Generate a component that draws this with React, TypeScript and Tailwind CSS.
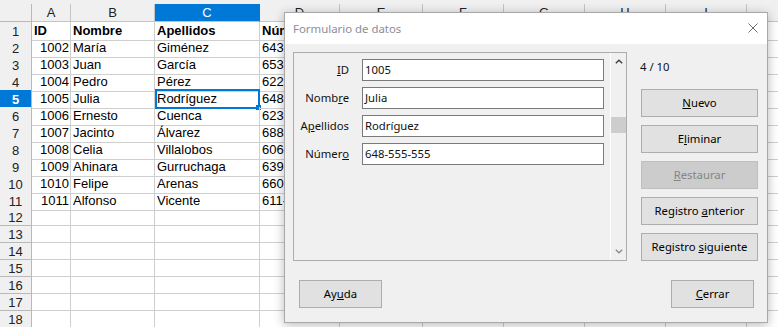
import React from 'react';

const colLetters = ['A', 'B', 'C', 'D', 'E', 'F', 'G', 'H', 'I', 'J'];

const rows: string[][] = [
  ['ID', 'Nombre', 'Apellidos', 'Número'],
  ['1002', 'María', 'Giménez', '643-555-555'],
  ['1003', 'Juan', 'García', '653-555-555'],
  ['1004', 'Pedro', 'Pérez', '622-555-555'],
  ['1005', 'Julia', 'Rodríguez', '648-555-555'],
  ['1006', 'Ernesto', 'Cuenca', '623-555-555'],
  ['1007', 'Jacinto', 'Álvarez', '688-555-555'],
  ['1008', 'Celia', 'Villalobos', '606-555-555'],
  ['1009', 'Ahinara', 'Gurruchaga', '639-555-555'],
  ['1010', 'Felipe', 'Arenas', '660-555-555'],
  ['1011', 'Alfonso', 'Vicente', '611-555-555'],
];

const gridCols =
  'grid grid-cols-[32px_39px_84px_105px_80px_83px_81px_81px_81px_81px_81px]';

// label with one underlined access key
const Key = ({ text, k }: { text: string; k: number }) => (
  <span>
    {text.slice(0, k)}
    <span className="underline underline-offset-[1px]">{text[k]}</span>
    {text.slice(k + 1)}
  </span>
);

const Sheet = () => (
  <div className="w-[778px] h-[327px] overflow-hidden bg-white font-['Liberation_Sans',Arial,sans-serif] text-[13px] text-black">
    <div className="h-[4px] bg-[#f0f0f0]" />
    {/* column header */}
    <div className={`${gridCols} h-[18px] bg-[#f0f0f0] text-[#222]`}>
      <div className="border-r border-b border-[#b9b9b9]" />
      {colLetters.map((c) => (
        <div
          key={c}
          className={`border-r border-b border-[#c4c4c4] flex items-center justify-center leading-none overflow-hidden ${
            c === 'C' ? 'bg-[#0078d7] text-white border-r-[#0078d7]' : ''
          }`}
        >
          {c}
        </div>
      ))}
    </div>
    {Array.from({ length: 18 }).map((_, i) => {
      const r = rows[i] || [];
      const n = i + 1;
      return (
        <div key={n} className={`${gridCols} h-[17px]`}>
          <div
            className={`border-r border-b border-[#b9b9b9] flex items-center justify-center leading-none ${
              n === 5 ? 'bg-[#0078d7] text-white font-bold' : 'bg-[#f0f0f0] text-[#222]'
            }`}
          >
            {n}
          </div>
          {colLetters.map((c, ci) => {
            const v = r[ci] || '';
            const isNum = i > 0 && ci === 0;
            return (
              <div
                key={c}
                className={`relative border-r border-b border-[#cfcfcf] leading-[18px] whitespace-nowrap ${
                  isNum ? 'text-right pr-[1px]' : 'pl-[2px]'
                } ${n === 1 ? 'font-bold' : ''}`}
              >
                <div className="overflow-hidden h-full">{v}</div>
                {n === 5 && c === 'C' && (
                  <div className="absolute left-0 -top-[1px] -right-[1px] -bottom-[1px] border-2 border-[#0078d7]">
                    <div className="absolute -right-[3px] -bottom-[3px] w-[5px] h-[5px] bg-[#0078d7]" />
                  </div>
                )}
              </div>
            );
          })}
        </div>
      );
    })}
  </div>
);

const Btn = ({
  children,
  disabled,
  w = 'w-[117px]',
}: {
  children: React.ReactNode;
  disabled?: boolean;
  w?: string;
}) => (
  <div
    className={`${w} h-[28px] border flex items-center justify-center ${
      disabled
        ? 'bg-[#cccccc] border-[#bfbfbf] text-[#858585]'
        : 'bg-[#e1e1e1] border-[#adadad] text-black'
    }`}
  >
    {children}
  </div>
);

const Field = ({ label, k, value }: { label: string; k: number; value: string }) => (
  <div className="flex items-center h-[22px]">
    <div className="w-[55px] text-right">
      <Key text={label} k={k} />
    </div>
    <div className="ml-[13px] w-[242px] h-[22px] bg-white border border-[#7a7a7a] pl-[2px] flex items-center">
      {value}
    </div>
  </div>
);

const Dialog = () => (
  <div className="absolute left-[284px] top-[12px] w-[484px] h-[311px] border border-[#a8a8a8] bg-[#f0f0f0] shadow-[0_2px_10px_rgba(0,0,0,0.28)] flex flex-col font-['Noto_Sans',sans-serif] text-[11.3px] text-[#111]">
    <div className="h-[31px] bg-white flex items-center justify-between pl-[8px] pr-[9px]">
      <span className="text-[#8d8d98] text-[11.4px]">Formulario de datos</span>
      <svg width="10" height="10" viewBox="0 0 10 10" className="-mt-[1px]">
        <path d="M0.5 0.5L9.5 9.5M9.5 0.5L0.5 9.5" stroke="#6e6e6e" strokeWidth="1" />
      </svg>
    </div>
    <div className="flex pt-[8px] pl-[8px]">
      <div className="w-[334px] h-[209px] border border-[#adadad] flex">
        <div className="flex-1 flex flex-col gap-[6px] pt-[6px]">
          <Field label="ID" k={0} value="1005" />
          <Field label="Nombre" k={4} value="Julia" />
          <Field label="Apellidos" k={1} value="Rodríguez" />
          <Field label="Número" k={5} value="648-555-555" />
        </div>
        <div className="w-[16px] border-l border-white flex flex-col">
          <div className="h-[17px] flex items-center justify-center">
            <svg width="8" height="5" viewBox="0 0 8 5">
              <path d="M0.8 4.3L4 1.2L7.2 4.3" fill="none" stroke="#404040" strokeWidth="1.4" />
            </svg>
          </div>
          <div className="mt-[47px] h-[16px] bg-[#cdcdcd]" />
          <div className="flex-1" />
          <div className="h-[17px] flex items-center justify-center">
            <svg width="8" height="5" viewBox="0 0 8 5">
              <path d="M0.8 0.7L4 3.8L7.2 0.7" fill="none" stroke="#8a8a8a" strokeWidth="1.2" />
            </svg>
          </div>
        </div>
      </div>
      <div className="ml-[14px] w-[117px] flex flex-col">
        <div className="h-[37px] pt-[7px] leading-[16px] -ml-[1px]">4 / 10</div>
        <div className="flex flex-col gap-[8px]">
          <Btn>
            <Key text="Nuevo" k={0} />
          </Btn>
          <Btn>
            <Key text="Eliminar" k={1} />
          </Btn>
          <Btn disabled>
            <Key text="Restaurar" k={0} />
          </Btn>
          <Btn>
            <Key text="Registro anterior" k={9} />
          </Btn>
          <Btn>
            <Key text="Registro siguiente" k={9} />
          </Btn>
        </div>
      </div>
    </div>
    <div className="flex justify-between pl-[14px] pr-[13px] mt-[19px]">
      <Btn w="w-[83px]">
        <Key text="Ayuda" k={2} />
      </Btn>
      <Btn w="w-[83px]">
        <Key text="Cerrar" k={0} />
      </Btn>
    </div>
  </div>
);

export default function App() {
  return (
    <div className="relative w-[778px] h-[327px] overflow-hidden">
      <Sheet />
      <Dialog />
    </div>
  );
}
